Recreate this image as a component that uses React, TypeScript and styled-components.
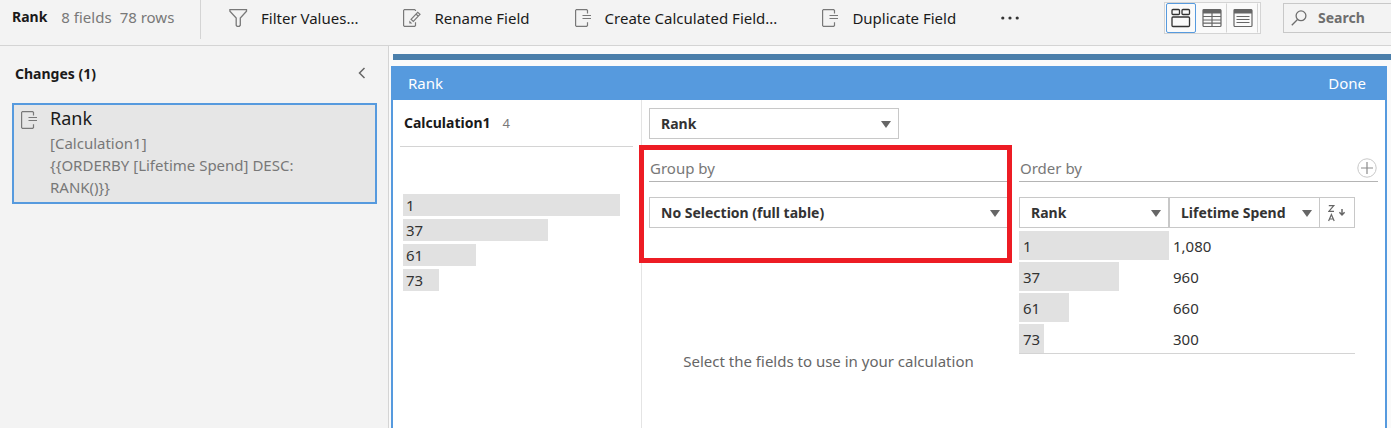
import React from "react";
import styled, { createGlobalStyle } from "styled-components";

const GlobalStyle = createGlobalStyle`
  *, *::before, *::after { box-sizing: border-box; }
  body { margin: 0; background: #fff; }
  body, button, input, select {
    font-family: "Noto Sans", "Open Sans", sans-serif;
    font-size: 15px;
    line-height: 22px;
    color: #333;
  }
  button { border: 0; padding: 0; background: none; cursor: pointer; }
  h1, h2, h3, p, ul { margin: 0; padding: 0; font-size: 15px; }
  ul { list-style: none; }
  svg { display: block; flex: none; }
`;

const Page = styled.div`
  min-height: 100vh;
  padding-bottom: 9px;
  display: flex;
  flex-direction: column;
`;

const Toolbar = styled.header`
  display: flex;
  align-items: flex-start;
  height: 46px;
  background: #f3f3f3;
  border-bottom: 1px solid #d4d4d4;
  overflow: hidden;
  white-space: nowrap;
`;

const Summary = styled.div`
  display: flex;
  flex: none;
  gap: 14px;
  width: 201px;
  height: 39px;
  padding: 6px 0 0 12px;
  border-right: 1px solid #d4d4d4;
  color: #787878;
`;

const SummaryTitle = styled.h1`
  color: #1a1a1a;
  font-size: 14px;
  font-weight: 700;
`;

const Counts = styled.div`
  display: flex;
  gap: 8px;
`;

const Actions = styled.nav`
  display: flex;
  flex: none;
  align-items: center;
  gap: 45px;
  height: 36px;
  padding-left: 28px;
`;

const ActionButton = styled.button`
  display: flex;
  align-items: center;
  gap: 13px;
  color: #1a1a1a;
`;

const Tools = styled.div`
  display: flex;
  flex: none;
  gap: 22px;
  margin-left: auto;
`;

const ViewSwitch = styled.div`
  display: flex;
  gap: 1px;
  margin-top: 2px;
  width: 97px;
  height: 32px;
  border: 1px solid #d4d4d4;
  background: #fafafa;
  padding: 0 1px;
`;

const ViewButton = styled.button<{ $active?: boolean }>`
  display: flex;
  align-items: center;
  justify-content: center;
  width: 30px;
  height: 30px;
  border: 1px solid ${(p) => (p.$active ? "#569ade" : "transparent")};
  border-right-color: ${(p) => (p.$active ? "#569ade" : "#d4d4d4")};
  border-radius: ${(p) => (p.$active ? "2px" : "0")};
  color: ${(p) => (p.$active ? "#333" : "#666")};
`;

const SearchField = styled.label`
  display: flex;
  align-items: center;
  gap: 11px;
  width: 108px;
  height: 30px;
  margin-top: 3px;
  padding-left: 7px;
  border: 1px solid #c8c8c8;
  border-right: 0;
`;

const SearchInput = styled.input`
  min-width: 0;
  flex: 1;
  border: 0;
  outline: 0;
  padding: 0;
  background: none;
  font-size: 14px;
  font-weight: 700;
  &::placeholder { color: #6e6e6e; opacity: 1; }
`;

const Body = styled.div`
  flex: 1;
  display: flex;
`;

const Sidebar = styled.aside`
  flex: none;
  width: 389px;
  padding: 17px 11px 0 12px;
  background: #f3f3f3;
  border-right: 1px solid #d4d4d4;
`;

const SidebarHeader = styled.div`
  display: flex;
  align-items: center;
  justify-content: space-between;
  padding: 0 11px 0 3px;
  margin-bottom: 18px;
`;

const SidebarTitle = styled.h2`
  font-size: 14px;
  font-weight: 700;
  color: #1a1a1a;
`;

const CollapseButton = styled.button`
  padding-bottom: 3px;
`;

const ChangeCard = styled.article`
  display: flex;
  gap: 12px;
  padding: 3px 7px;
  min-height: 101px;
  border: 2px solid #569ade;
  background: #e6e6e6;
  color: #787878;
`;

const CardIcon = styled.div`
  padding-top: 3px;
`;

const CardTitle = styled.h3`
  font-size: 18px;
  font-weight: 400;
  line-height: 20px;
  color: #1a1a1a;
`;

const CardText = styled.p`
  white-space: pre-line;
  padding-top: 4px;
`;

const Main = styled.main`
  flex: 1;
  min-width: 0;
  display: flex;
  flex-direction: column;
  padding: 8px 0 0 2px;
  background: #fafafa;
`;

const FieldStrip = styled.div`
  height: 6px;
  margin: 0 0 6px 2px;
  background: #4b7fab;
`;

const Panel = styled.section`
  flex: 1;
  display: flex;
  flex-direction: column;
  margin-right: 4px;
  border: solid #569ade;
  border-width: 0 2px;
  background: #fff;
`;

const PanelHeader = styled.div`
  display: flex;
  align-items: center;
  justify-content: space-between;
  height: 34px;
  padding: 0 19px 0 15px;
  background: #569ade;
  color: #fff;
`;

const PanelTitle = styled.h2`
  font-weight: 400;
`;

const DoneButton = styled.button`
  color: #fff;
`;

const PanelBody = styled.div`
  flex: 1;
  display: flex;
`;

const Profile = styled.div`
  flex: none;
  width: 249px;
  padding: 0 8px 0 7px;
  border-right: 1px solid #e4e4e4;
`;

const ProfileHeader = styled.div`
  display: flex;
  align-items: center;
  gap: 12px;
  height: 47px;
  padding-left: 4px;
  border-bottom: 1px solid #d4d4d4;
`;

const ProfileTitle = styled.h3`
  font-size: 14px;
  font-weight: 700;
  color: #1a1a1a;
`;

const ProfileCount = styled.span`
  font-size: 13px;
  color: #787878;
`;

const BarList = styled.ul`
  display: flex;
  flex-direction: column;
  gap: 3px;
  padding: 47px 13px 0 3px;
`;

const Bar = styled.li`
  height: 22px;
  padding-left: 3px;
  background: #e1e1e1;
`;

const Editor = styled.div`
  flex: 1;
  min-width: 0;
  padding: 8px 7px 0;
`;

const SelectBox = styled.div<{ $width?: string }>`
  position: relative;
  flex: none;
  width: ${(p) => p.$width ?? "100%"};
  height: 31px;
`;

const NativeSelect = styled.select`
  appearance: none;
  width: 100%;
  height: 100%;
  padding: 0 24px 0 11px;
  border: 1px solid #c8c8c8;
  border-radius: 0;
  background: #fff;
  font-size: 14px;
  font-weight: 700;
`;

const Caret = styled.svg`
  position: absolute;
  right: 8px;
  top: 13px;
  pointer-events: none;
`;

const Columns = styled.div`
  display: grid;
  grid-template-columns: 1fr 1fr;
  gap: 11px;
  padding-top: 16px;
`;

const Column = styled.section`
  min-width: 0;
`;

const ColumnHeader = styled.div`
  display: flex;
  align-items: center;
  justify-content: space-between;
  height: 27px;
  margin-bottom: 15px;
  padding: 0 1px;
  border-bottom: 1px solid #b4b4b4;
`;

const ColumnTitle = styled.h3`
  font-weight: 400;
  color: #787878;
`;

const Highlight = styled.div`
  position: absolute;
  inset: -10px -4px -35px -10px;
  border: 5px solid #ed1c24;
  pointer-events: none;
`;

const GroupPick = styled.div`
  position: relative;
`;

const Hint = styled.p`
  padding-top: 122px;
  text-align: center;
  color: #666;
`;

const OrderTable = styled.table`
  width: 336px;
  border-collapse: collapse;
  table-layout: fixed;
  border-bottom: 1px solid #d4d4d4;
`;

const HeadCell = styled.th<{ $width: string }>`
  width: ${(p) => p.$width};
  padding: 0 0 1px;
`;

const HeadGroup = styled.div`
  display: flex;
`;

const SortButton = styled.button`
  display: flex;
  flex: 1;
  align-items: center;
  justify-content: center;
  height: 31px;
  border: 1px solid #c8c8c8;
  border-left: 0;
`;

const Cell = styled.td`
  height: 31px;
  padding: 2px 0 0;
`;

const CellBar = styled.div`
  height: 29px;
  padding: 4px 0 0 4px;
  background: #e1e1e1;
`;

const CellText = styled.div`
  height: 29px;
  padding: 4px 0 0 4px;
`;

const FilterIcon = () => (
  <svg width="19" height="18" viewBox="0 0 19 18" fill="none" stroke="#787878" strokeWidth="1.3">
    <path d="M.9.7h16.6v1.6L11.300 9v7.200l-1 1.100H8.100L7.200 16.200V9L.9 2.300z" />
  </svg>
);

const CalcIcon = () => (
  <svg width="17" height="18" viewBox="0 0 17 18" fill="none" stroke="#787878" strokeWidth="1.2">
    <path d="M12.500 4.500V1.500L11.700.6H1.400L.6 1.400v15.200l.8.8h10.300l.8-.9V13.300" />
    <path d="M7.500 6.500H16M7.500 9.500H16" />
  </svg>
);

const RenameIcon = () => (
  <svg width="18" height="18" viewBox="0 0 18 18" fill="none" stroke="#787878" strokeWidth="1.2">
    <path d="M12.500 2V1.400L11.700.6H1.400L.6 1.400v15.200l.8.8h10.300l.8-.9V13.300" />
    <path d="M8 10.300L14.700 3.300L17 5.300L10.300 12.500zM13 5l2.300 2.200" />
    <path d="M6.300 11.500V14.500H9.300z" fill="#787878" stroke="none" />
  </svg>
);

const MoreIcon = () => (
  <svg width="18" height="4" viewBox="0 0 18 4" fill="#333">
    <circle cx="1.800" cy="2" r="1.600" />
    <circle cx="9" cy="2" r="1.600" />
    <circle cx="16.200" cy="2" r="1.600" />
  </svg>
);

const ProfileViewIcon = () => (
  <svg width="20" height="20" viewBox="0 0 20 20" fill="none" stroke="currentColor" strokeWidth="1.300">
    <rect x="1" y="1.500" width="7.500" height="5" rx="1" />
    <rect x="11" y="1.500" width="7.500" height="5" rx="1" />
    <rect x="1" y="9" width="17.500" height="9.500" rx="1" />
  </svg>
);

const GridViewIcon = () => (
  <svg width="20" height="20" viewBox="0 0 20 20" fill="none" stroke="currentColor" strokeWidth="1.200">
    <rect x="1" y="1.500" width="18" height="17" rx="1" />
    <path d="M1 3.500h18" strokeWidth="4" />
    <path d="M10 5v13.500M1 8.500h18M1 12h18M1 15.200h18" />
  </svg>
);

const ListViewIcon = () => (
  <svg width="20" height="20" viewBox="0 0 20 20" fill="none" stroke="currentColor" strokeWidth="1.200">
    <rect x="1" y="1.500" width="18" height="17" rx="1" />
    <path d="M1 3.500h18" strokeWidth="4" />
    <path d="M3.500 8.500h13M3.500 11.500h13M3.500 14.500h13" />
  </svg>
);

const SearchIcon = () => (
  <svg width="16" height="16" viewBox="0 0 16 16" fill="none" stroke="#6e6e6e" strokeWidth="1.300">
    <circle cx="10" cy="5.800" r="4.900" />
    <path d="M6.500 9.500L.8 15.200" />
  </svg>
);

const CollapseIcon = () => (
  <svg width="8" height="12" viewBox="0 0 8 12" fill="none" stroke="#666" strokeWidth="1.500">
    <path d="M6.500 1L1.500 6l5 5" />
  </svg>
);

const AddIcon = () => (
  <svg width="20" height="20" viewBox="0 0 20 20" fill="none">
    <circle cx="10" cy="10" r="9.200" stroke="#c8c8c8" />
    <path d="M10 4v12M4 10h12" stroke="#8c8c8c" strokeWidth="1.200" />
  </svg>
);

const SortIcon = () => (
  <svg width="18" height="18" viewBox="0 0 18 18" fill="none" stroke="#666" strokeWidth="1.200">
    <path d="M.8 1.600h5L.8 7.400h5.200M.6 17L3.400 10.500L6.200 17M1.600 15h3.600" />
    <path d="M14 5v6M11.400 8.300L14 11l2.600-2.700" strokeWidth="1.500" />
  </svg>
);

type PickerProps = { label: string; value: string; width?: string };

const Picker = ({ label, value, width }: PickerProps) => (
  <SelectBox $width={width}>
    <NativeSelect aria-label={label} defaultValue={value}>
      <option>{value}</option>
    </NativeSelect>
    <Caret width="10" height="7" viewBox="0 0 10 7" aria-hidden="true">
      <path d="M0 0h10L5 7z" fill="#666" />
    </Caret>
  </SelectBox>
);

const profileBars = [
  { value: "1", share: 100 },
  { value: "37", share: 67 },
  { value: "61", share: 33.5 },
  { value: "73", share: 16.7 },
];

const orderRows = [
  { rank: "1", spend: "1,080", share: 100 },
  { rank: "37", spend: "960", share: 66.7 },
  { rank: "61", spend: "660", share: 33.3 },
  { rank: "73", spend: "300", share: 16.7 },
];

export default function App() {
  return (
    <Page>
      <GlobalStyle />
      <Toolbar>
        <Summary>
          <SummaryTitle>Rank</SummaryTitle>
          <Counts>
            <span>8 fields</span>
            <span>78 rows</span>
          </Counts>
        </Summary>
        <Actions>
          <ActionButton><FilterIcon />Filter Values...</ActionButton>
          <ActionButton><RenameIcon />Rename Field</ActionButton>
          <ActionButton><CalcIcon />Create Calculated Field...</ActionButton>
          <ActionButton><CalcIcon />Duplicate Field</ActionButton>
          <ActionButton aria-label="More actions"><MoreIcon /></ActionButton>
        </Actions>
        <Tools>
          <ViewSwitch>
            <ViewButton $active aria-pressed="true" aria-label="Profile view"><ProfileViewIcon /></ViewButton>
            <ViewButton aria-pressed="false" aria-label="Grid view"><GridViewIcon /></ViewButton>
            <ViewButton aria-pressed="false" aria-label="List view"><ListViewIcon /></ViewButton>
          </ViewSwitch>
          <SearchField>
            <SearchIcon />
            <SearchInput type="search" placeholder="Search" aria-label="Search" />
          </SearchField>
        </Tools>
      </Toolbar>
      <Body>
        <Sidebar>
          <SidebarHeader>
            <SidebarTitle>Changes (1)</SidebarTitle>
            <CollapseButton aria-label="Collapse changes"><CollapseIcon /></CollapseButton>
          </SidebarHeader>
          <ChangeCard>
            <CardIcon><CalcIcon /></CardIcon>
            <div>
              <CardTitle>Rank</CardTitle>
              <CardText>{"[Calculation1]\n{{ORDERBY [Lifetime Spend] DESC:\nRANK()}}"}</CardText>
            </div>
          </ChangeCard>
        </Sidebar>
        <Main>
          <FieldStrip />
          <Panel>
            <PanelHeader>
              <PanelTitle>Rank</PanelTitle>
              <DoneButton>Done</DoneButton>
            </PanelHeader>
            <PanelBody>
              <Profile>
                <ProfileHeader>
                  <ProfileTitle>Calculation1</ProfileTitle>
                  <ProfileCount>4</ProfileCount>
                </ProfileHeader>
                <BarList>
                  {profileBars.map((b) => (
                    <Bar key={b.value} style={{ width: `${b.share}%` }}>{b.value}</Bar>
                  ))}
                </BarList>
              </Profile>
              <Editor>
                <Picker label="Calculation type" value="Rank" width="250px" />
                <Columns>
                  <Column>
                    <GroupPick>
                      <ColumnHeader><ColumnTitle>Group by</ColumnTitle></ColumnHeader>
                      <Picker label="Group by" value="No Selection (full table)" />
                      <Highlight />
                    </GroupPick>
                    <Hint>Select the fields to use in your calculation</Hint>
                  </Column>
                  <Column>
                    <ColumnHeader>
                      <ColumnTitle>Order by</ColumnTitle>
                      <button aria-label="Add order field"><AddIcon /></button>
                    </ColumnHeader>
                    <OrderTable>
                      <thead>
                        <tr>
                          <HeadCell $width="150px"><Picker label="Rank field" value="Rank" /></HeadCell>
                          <HeadCell $width="186px">
                            <HeadGroup>
                              <Picker label="Order field" value="Lifetime Spend" width="151px" />
                              <SortButton aria-label="Sort descending"><SortIcon /></SortButton>
                            </HeadGroup>
                          </HeadCell>
                        </tr>
                      </thead>
                      <tbody>
                        {orderRows.map((r) => (
                          <tr key={r.rank}>
                            <Cell><CellBar style={{ width: `${r.share}%` }}>{r.rank}</CellBar></Cell>
                            <Cell><CellText>{r.spend}</CellText></Cell>
                          </tr>
                        ))}
                      </tbody>
                    </OrderTable>
                  </Column>
                </Columns>
              </Editor>
            </PanelBody>
          </Panel>
        </Main>
      </Body>
    </Page>
  );
}
